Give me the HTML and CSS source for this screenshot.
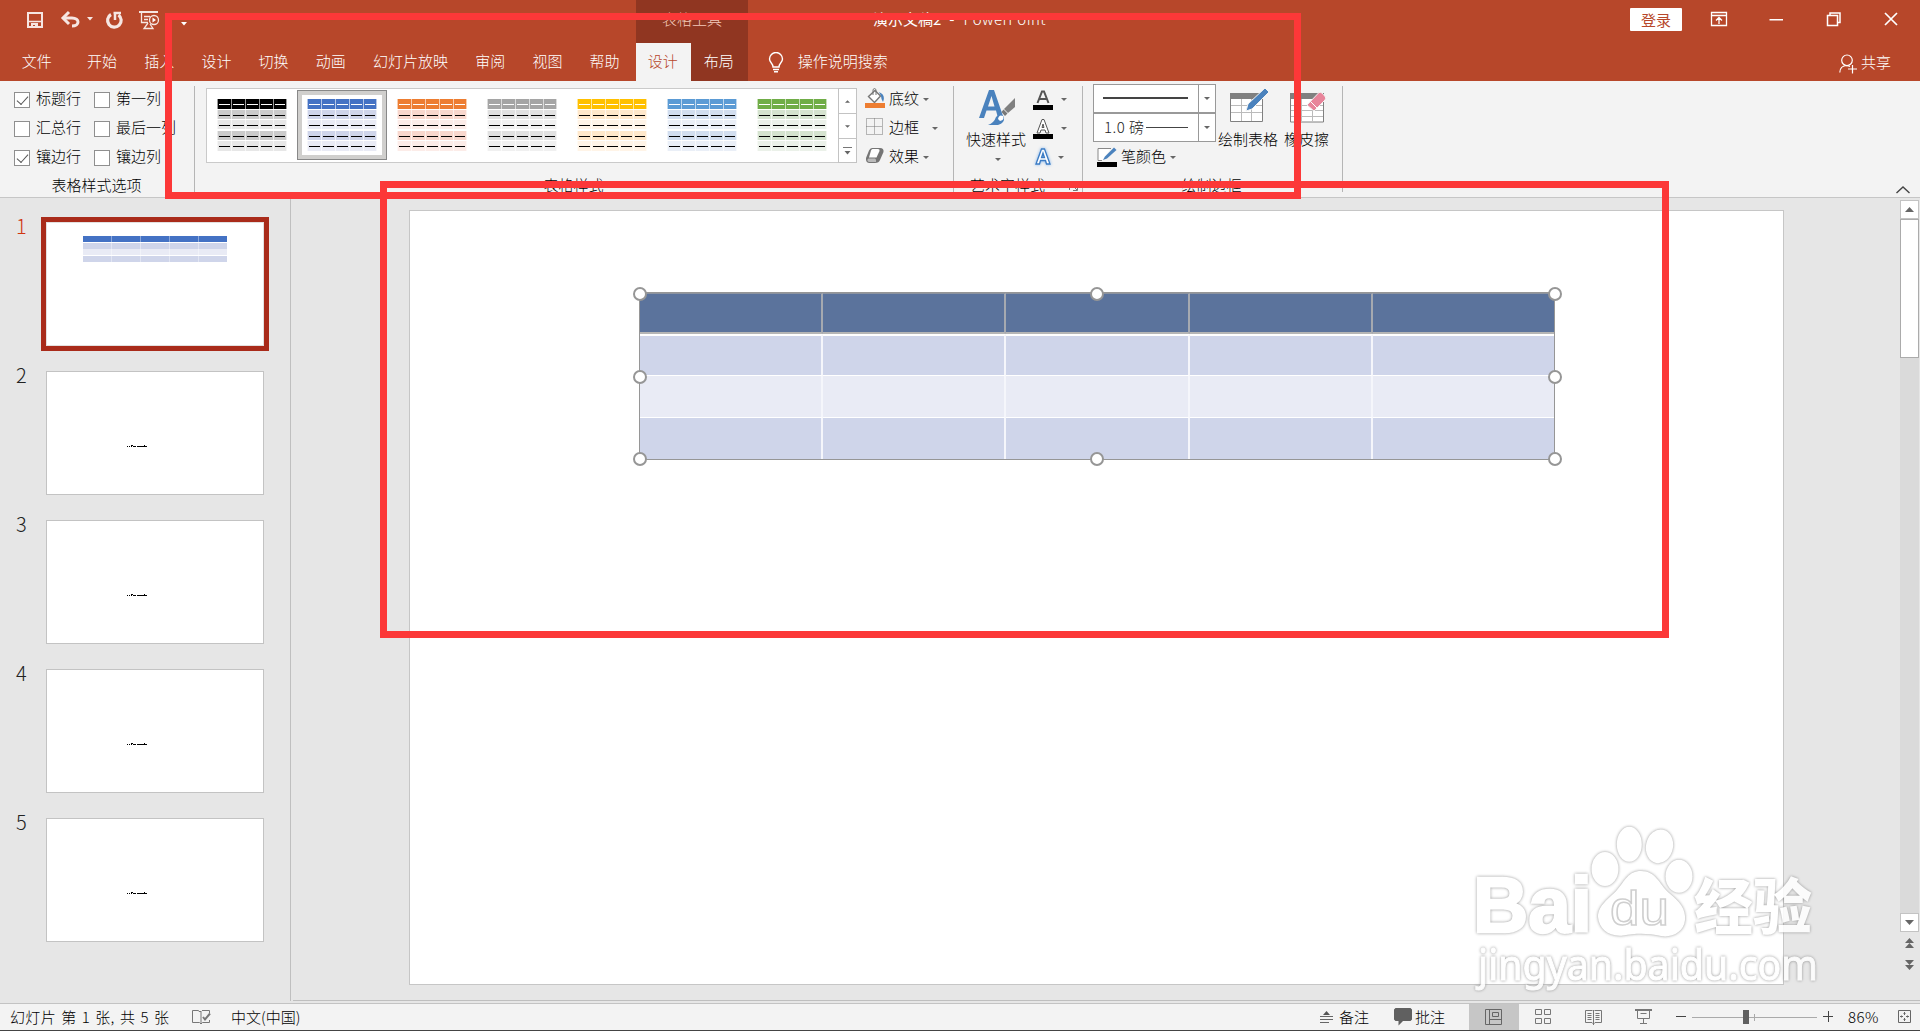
FILE: index.html
```html
<!DOCTYPE html>
<html lang="zh-CN">
<head>
<meta charset="utf-8">
<title>演示文稿2 - PowerPoint</title>
<link rel="stylesheet" href="styles.css">
</head>
<body>
<svg class="defs" width="0" height="0">
  <symbol id="swatch" viewBox="0 0 70 52">
    <rect width="70" height="10" fill="var(--h)"/>
    <rect y="11" width="70" height="9" fill="var(--a)"/>
    <rect y="21" width="70" height="9" fill="var(--b)"/>
    <rect y="32" width="70" height="9" fill="var(--a)"/>
    <rect y="42" width="70" height="10" fill="var(--b)"/>
    <path d="M.5 0V52M14.5 0V52M28.5 0V52M42.5 0V52M56.5 0V52M69.5 0V52" stroke="#fff" stroke-opacity=".6"/>
    <path d="M2 5.5H68" stroke="#fff" stroke-dasharray="11 3"/>
    <path d="M2 16.5H68M2 26.5H68M2 37.5H68M2 47.5H68" stroke="#000" stroke-dasharray="11 3"/>
  </symbol>
  <symbol id="caret" viewBox="0 0 6 3"><path d="M0 0H6L3 3Z" fill="#666"/></symbol>
  <symbol id="scribble" viewBox="0 0 20 3"><path d="M0 1h1v1H0zM2 1h1v1H2zM4 0h2v1H5v1H4zM6 1h3v1H6zM10 1h7V0h1v1h2v1H10z" fill="#000"/></symbol>
</svg>

<header class="titlebar">
  <div class="quick">
    <svg width="170" height="43" viewBox="0 0 170 43" fill="none" stroke="#f6e6e2">
      <path d="M28 13H42V27H28Z" stroke-width="2"/><path d="M28 21.500H42" stroke-width="1.500"/><path d="M31 28V23H38V28H35V25H33V28Z" fill="#f6e6e2" stroke="none"/>
      <path d="M63 18H72C80 18 80 26 72 26" stroke-width="3"/><path d="M69 12L63 18L69 24" stroke-width="3"/>
      <path d="M87 17H93L90 20.500Z" fill="#f6e6e2" stroke="none"/>
      <path d="M111 14.500A6.800 6.800 0 1 0 118.500 15" stroke-width="3.200"/><path d="M113.500 13H121M115 12V20" stroke-width="2.500"/>
      <path d="M139 12H158" stroke-width="2"/><path d="M141.500 13V22.500H148M144 16.500H150M144 19.500H148" stroke-width="1.300"/><circle cx="154" cy="20" r="4.500" stroke-width="1.300"/><path d="M152.500 17.500V22.500L156 20Z" fill="#fff" stroke="none"/><path d="M148 23L144 28.500H153L150 24" stroke-width="1.300"/>
    </svg>
    <svg class="more" width="6" height="4" viewBox="0 0 6 4"><path d="M0 0H6L3 3.500Z" fill="#fff"/></svg>
  </div>
  <div class="tool-title">表格工具</div>
  <div class="doc-title"><span>演示文稿2</span><span>-</span><span class="app-name">PowerPoint</span></div>
  <div class="login">登录</div>
  <svg class="winbtns" width="200" height="38" viewBox="0 0 200 38" fill="none" stroke="#fff" stroke-width="1.300">
    <path d="M5.500 12.500H20.500V25.500H5.500ZM5.500 15.500H20.500M13 24V18M10 20.500L13 17.500L16 20.500"/>
    <path d="M63.500 19.800H77M121.500 15.500H131.500V25.500H121.500ZM124 15V13H134V22.500H132" stroke-width="1.500"/>
    <path d="M179 13L191 25M191 13L179 25" stroke-width="1.700"/>
  </svg>
</header>

<nav class="tabs">
  <span class="tab file">文件</span><span class="tab">开始</span><span class="tab">插入</span><span class="tab">设计</span><span class="tab">切换</span><span class="tab">动画</span><span class="tab">幻灯片放映</span><span class="tab">审阅</span><span class="tab">视图</span><span class="tab">帮助</span>
  <span class="tab active">设计</span><span class="tab layout">布局</span>
  <svg class="bulb" width="16" height="21" viewBox="0 0 16 21" fill="none" stroke="#fff" stroke-width="1.400"><path d="M5 15C5 11 1.500 10.500 1.500 7A6.300 6.300 0 0 1 14.500 7C14.500 10.500 11 11 11 15ZM5 17.500H11M6 19.800H10"/></svg>
  <span class="tell">操作说明搜索</span>
  <svg class="person" width="18" height="20" viewBox="0 0 18 20" fill="none" stroke="#fff" stroke-width="1.200"><circle cx="8" cy="6.300" r="5.300"/><path d="M.8 18.500C1 14 4 11.500 8 11.500L11 12.500M9 15H18M13.500 11V19.500"/></svg>
  <span class="share">共享</span>
</nav>

<section class="ribbon">
  <div class="group options">
    <div class="checks">
      <label><i class="on"></i><span>标题行</span></label><label><i></i><span>第一列</span></label>
      <label><i></i><span>汇总行</span></label><label><i></i><span>最后一列</span></label>
      <label><i class="on"></i><span>镶边行</span></label><label><i></i><span>镶边列</span></label>
    </div>
    <div class="caption">表格样式选项</div>
  </div>
  <div class="group styles">
    <div class="row">
      <div class="gallery">
        <div class="item black"><svg><use href="#swatch"/></svg></div>
        <div class="item blue selected"><svg><use href="#swatch"/></svg></div>
        <div class="item orange"><svg><use href="#swatch"/></svg></div>
        <div class="item gray"><svg><use href="#swatch"/></svg></div>
        <div class="item gold"><svg><use href="#swatch"/></svg></div>
        <div class="item sky"><svg><use href="#swatch"/></svg></div>
        <div class="item green"><svg><use href="#swatch"/></svg></div>
        <div class="spin">
          <b><svg width="5" height="3" viewBox="0 0 6 3"><path d="M0 3H6L3 0Z" fill="#666"/></svg></b>
          <b><svg width="5" height="3"><use href="#caret"/></svg></b>
          <b><svg width="9" height="8" viewBox="0 0 9 8"><path d="M0 .5H9" stroke="#777"/><path d="M1.500 4H7.500L4.500 7.500Z" fill="#666"/></svg></b>
        </div>
      </div>
      <div class="effects">
        <div><svg width="20" height="21" viewBox="0 0 20 21"><path d="M3.500 8.500L10 2.500L15.500 8L9.500 14.500Z" fill="#fff" stroke="#777" stroke-width="1.400"/><path d="M8 7V1.500Q9.500-.5 11 1.500V7" fill="none" stroke="#777"/><path d="M14 4Q21 7 18 14Q16 11 16 8Z" fill="#4a82bd"/><path d="M0 15H20V20H0Z" fill="#ed7d31"/></svg><span>底纹</span><svg class="c" width="6" height="3"><use href="#caret"/></svg></div>
        <div><svg width="20" height="21" viewBox="0 0 20 21"><path d="M1.500 1.500H17.500V17.500H1.500ZM1.500 9.500H17.500M9.500 1.500V17.500" fill="none" stroke="#777" stroke-dasharray="1 1"/></svg><span>边框</span><svg class="c far" width="6" height="3"><use href="#caret"/></svg></div>
        <div><svg width="20" height="21" viewBox="0 0 20 21"><path d="M7 2H15Q19 2 18.500 6L15 14Q14 17 10 17H4Q.5 16.500 1 12L4 4.500Q5 2 7 2Z" fill="#757575"/><path d="M7.500 3H13Q15 3.200 14.500 5L11.500 11.500H4L6 4.500Q6.500 3 7.500 3Z" fill="#fff"/><path d="M3.500 12.500H10Q11.500 13 11 16H4.500Q2 15.500 2.500 13.500Z" fill="#bbb"/></svg><span>效果</span><svg class="c" width="6" height="3"><use href="#caret"/></svg></div>
      </div>
    </div>
    <div class="caption">表格样式</div>
  </div>
  <div class="group wordart">
    <div class="row">
      <div class="big quickstyle">
        <svg width="38" height="36" viewBox="0 0 38 36"><path d="M1 28L11 0H16L25 26L20 28L18 20.500H8.500L6 28ZM10 16.500H16.500L13.500 6Z" fill="#4a82bd" fill-rule="evenodd"/><path d="M37 8V17L30 23L26 19Z" fill="#808080"/><path d="M25.500 19.500L29.500 23.500L27 26L23.500 22Z" fill="#777"/><path d="M10 35Q16 33 18 27Q22 22 26 27Q27 33 20 35Z" fill="#4a82bd"/><path d="M20 29Q21 24 25 26Q27 30 22 31Z" fill="#fff"/></svg>
        <span>快速样式</span><svg class="c" width="6" height="3"><use href="#caret"/></svg>
      </div>
      <div class="letters">
        <div><svg width="20" height="22" viewBox="0 0 20 22"><path d="M4.500 14L9 2.500H11L15.500 14M6.300 10H13.700" fill="none" stroke="#555" stroke-width="2"/><path d="M0 16H20V21H0Z"/></svg><svg class="c" width="6" height="3"><use href="#caret"/></svg></div>
        <div><svg width="20" height="22" viewBox="0 0 20 22"><path d="M4 15L9 1.500H11L16 15H13L12 12H8L7 15ZM9 9.500H11L10 6Z" fill="#fff" stroke="#555"/><path d="M0 16H20V21H0Z"/></svg><svg class="c" width="6" height="3"><use href="#caret"/></svg></div>
        <div><svg class="glow" width="20" height="22" viewBox="0 0 20 22"><path d="M3 17L8.500 2H11.500L17 17H13.500L12.500 13.500H7.500L6.500 17ZM8.500 10.500H11.500L10 6Z" fill="#fff" stroke="#3c7cc4" stroke-width="1.300"/></svg><svg class="c near" width="6" height="3"><use href="#caret"/></svg></div>
      </div>
    </div>
    <div class="caption">艺术字样式<svg class="launcher" width="9" height="9" viewBox="0 0 9 9" fill="none" stroke="#777"><path d="M.5 8V.5H8M3 3L8 8M8.500 4V8.500H4"/></svg></div>
  </div>
  <div class="group borders">
    <div class="row">
      <div class="pens">
        <div class="combo"><hr class="thick"><b><svg width="6" height="3"><use href="#caret"/></svg></b></div>
        <div class="combo"><span>1.0 磅</span><hr><b><svg width="6" height="3"><use href="#caret"/></svg></b></div>
        <div class="pencolor"><svg width="20" height="20" viewBox="0 0 20 20"><path d="M14 1.500H1V13.500H5" fill="#fff" stroke="#888"/><path d="M6 13L8 9.500L17 .5L19.500 3L10 11.500Z" fill="#4a82bd"/><path d="M0 15H20V20H0Z"/></svg><span>笔颜色</span><svg class="c" width="6" height="3"><use href="#caret"/></svg></div>
      </div>
      <div class="big draw"><svg width="40" height="35" viewBox="0 0 40 35"><path d="M1.500 7.500H33.500V33.500H1.500Z" fill="#fff" stroke="#808080"/><path d="M1 5H34V11H1Z" fill="#808080"/><path d="M2 17.500H33M2 24.500H33M12.500 11V33M22.500 11V33" stroke="#bbb"/><path d="M17 23L19 16L36 0L40 4L23 21Z" fill="#4a82bd" stroke="#f3f3f3"/></svg><span>绘制表格</span></div>
      <div class="big erase"><svg width="38" height="35" viewBox="0 0 38 35"><path d="M1.500 7.500H34.500V34H1.500Z" fill="#fff" stroke="#808080"/><path d="M1 5H35V11H1Z" fill="#808080"/><path d="M2 17.500H34M2 22.500H34M2 28.500H34M12.500 11V33M23.500 11V33" stroke="#bbb"/><path d="M18 17L30 4.500Q31.500 4 33 5L36.500 9Q37 10.500 36 12L25 23Z" fill="#e8849a" stroke="#f3f3f3"/><path d="M21.500 13.500L28 20" stroke="#fff"/></svg><span>橡皮擦</span></div>
    </div>
    <div class="caption">绘制边框</div>
  </div>
  <svg class="collapse" width="14" height="8" viewBox="0 0 14 8"><path d="M.5 7L7 1L13.500 7" fill="none" stroke="#444" stroke-width="1.400"/></svg>
</section>

<main class="work">
  <aside class="thumbs">
    <div class="thumb current"><span>1</span><div class="page"><div class="mini"><i></i><i></i><i></i><i></i></div></div></div>
    <div class="thumb"><span>2</span><div class="page"><svg width="20" height="3"><use href="#scribble"/></svg></div></div>
    <div class="thumb"><span>3</span><div class="page"><svg width="20" height="3"><use href="#scribble"/></svg></div></div>
    <div class="thumb"><span>4</span><div class="page"><svg width="20" height="3"><use href="#scribble"/></svg></div></div>
    <div class="thumb"><span>5</span><div class="page"><svg width="20" height="3"><use href="#scribble"/></svg></div></div>
  </aside>
  <div class="canvas">
    <div class="slide">
      <div class="table-frame">
        <table>
          <colgroup><col class="w1"><col class="w1"><col class="w2"><col class="w1"><col></colgroup>
          <tr class="head"><td></td><td></td><td></td><td></td><td></td></tr>
          <tr class="odd first"><td></td><td></td><td></td><td></td><td></td></tr>
          <tr class="even"><td></td><td></td><td></td><td></td><td></td></tr>
          <tr class="odd last"><td></td><td></td><td></td><td></td><td></td></tr>
        </table>
        <i class="handle l t"></i><i class="handle m t"></i><i class="handle r t"></i>
        <i class="handle l c"></i><i class="handle r c"></i>
        <i class="handle l b"></i><i class="handle m b"></i><i class="handle r b"></i>
      </div>
    </div>
    <div class="scroll">
      <b><svg width="9" height="5" viewBox="0 0 9 5"><path d="M0 5H9L4.500 0Z" fill="#666"/></svg></b>
      <div class="track"><div class="knob"></div></div>
      <b><svg width="9" height="5" viewBox="0 0 9 5"><path d="M0 0H9L4.500 5Z" fill="#666"/></svg></b>
      <svg class="pager" width="9" height="34" viewBox="0 0 9 34"><path d="M0 5H9L4.500 0ZM0 10H9L4.500 5ZM0 22H9L4.500 27ZM0 27H9L4.500 32Z" fill="#666"/></svg>
    </div>
  </div>
</main>

<footer class="status">
  <span class="count">幻灯片 第 1 张, 共 5 张</span>
  <svg class="book" width="19" height="16" viewBox="0 0 19 16" fill="none" stroke="#777"><path d="M9 2.500H7L6.500 1.500H.5V13.500H7.500L9 15L10.500 13.500H17.500V11M9 2V15M10 1.500H17.500V4"/><path d="M11 8L13 10.500L18 4.500" stroke-width="2"/></svg>
  <span class="lang">中文(中国)</span>
  <svg class="notes-icon" width="13" height="14" viewBox="0 0 13 14"><path d="M3 5H10L6.500 1Z" fill="#555"/><path d="M0 6.500H13M0 9.500H13M0 12.500H9" stroke="#666"/></svg>
  <span class="notes">备注</span>
  <svg class="comment-icon" width="18" height="18" viewBox="0 0 18 18"><path d="M1.500 0H16.500L18 1.500V11.500L16.500 13H9L4.500 17.500V13H1.500L0 11.500V1.500Z" fill="#606060"/></svg>
  <span class="comments">批注</span>
  <div class="view on"><svg width="18" height="17" viewBox="0 0 18 17" fill="none" stroke="#666"><path d="M.5 .5H16.500V15.500H.5ZM4.500 .5V15.500M4.500 10.500H16.500M7.500 3.500H13.500V7.500H7.500Z"/></svg></div>
  <div class="view"><svg width="18" height="17" viewBox="0 0 18 17" fill="none" stroke="#777"><path d="M.5 .5H6.500V5.500H.5ZM9.500 .5H15.500V5.500H9.500ZM.5 9.500H6.500V14.500H.5ZM9.500 9.500H15.500V14.500H9.500Z"/></svg></div>
  <div class="view"><svg width="18" height="17" viewBox="0 0 18 17" fill="none" stroke="#777"><path d="M7.500 1.500H.5V13.500H7L8.500 15L10 13.500H16.500V1.500H9.500M8.500 1V16M2.500 4.500H6.500M2.500 6.500H6.500M2.500 8.500H6.500M2.500 10.500H6.500M10.500 4.500H14.500M10.500 6.500H14.500M10.500 8.500H14.500M10.500 10.500H14.500"/></svg></div>
  <div class="view"><svg width="18" height="17" viewBox="0 0 18 17" fill="none" stroke="#777"><path d="M0 1H17" stroke-width="2"/><path d="M2.500 2V9.500H14.500V2M5.500 4.500H11.500M8.500 10V14.500M5 14.500H12"/></svg></div>
  <svg class="zoom" width="160" height="17" viewBox="0 0 160 17"><path d="M0 7.500H10M147 7.500H157M152.500 2V13" stroke="#444"/><path d="M16 8.500H141M78.500 5V12" stroke="#aaa"/><path d="M67 1H73V15H67Z" fill="#606060"/></svg>
  <span class="percent">86%</span>
  <svg class="fit" width="14" height="14" viewBox="0 0 14 14" fill="none" stroke="#666"><path d="M.5 .5H12.500V12.500H.5Z"/><path d="M6.500 2V5M6.500 8V11M2 6.500H5M8 6.500H11M5.500 3.500H7.500M5.500 9.500H7.500M3.500 5.500V7.500M9.500 5.500V7.500"/></svg>
</footer>

<svg class="watermark" width="380" height="180" viewBox="1460 820 380 180">
  <g fill="#fff">
    <text class="wm-bai" x="1473" y="932" textLength="119" lengthAdjust="spacingAndGlyphs">Bai</text>
    <ellipse cx="1605" cy="869" rx="13.500" ry="17"/>
    <ellipse cx="1629.300" cy="844.300" rx="12.500" ry="17.500"/>
    <ellipse cx="1659.500" cy="846.300" rx="13.500" ry="17" transform="rotate(12 1659.500 846.300)"/>
    <ellipse cx="1679" cy="876.300" rx="13.500" ry="16.500"/>
    <path d="M1641 871C1656 871 1659 884 1669 893C1680 902 1686 909 1685 920C1684 932 1672 938 1661 936C1648 933 1636 933 1623 935.500C1609 937 1599 929 1598 917C1598 905 1609 899 1617 890C1625 881 1628 871 1641 871Z"/>
    <text class="wm-cn" x="1694" y="929" textLength="118" lengthAdjust="spacingAndGlyphs">经验</text>
    <text class="wm-url" x="1478" y="980" textLength="340" lengthAdjust="spacingAndGlyphs">jingyan.baidu.com</text>
  </g>
  <text class="wm-du" x="1610" y="925" textLength="59" lengthAdjust="spacingAndGlyphs">du</text>
</svg>
<div class="mark mark-ribbon"></div>
<div class="mark mark-table"></div>
</body>
</html>
```
FILE: styles.css
```css
* { box-sizing: border-box; }
body {
  margin: 0; width: 1920px; height: 1031px; overflow: hidden; position: relative;
  display: flex; flex-direction: column;
  font: 300 15px/20px "Noto Sans CJK SC", sans-serif; color: #000; background: #e6e6e6;
  white-space: nowrap;
}
svg { display: block; flex: none; }
.defs { position: absolute; }
i { font-style: normal; display: block; }

.titlebar { height: 43px; background: #b7472a; display: flex; color: #fff; flex: none; }
.quick { width: 636px; display: flex; }
.more { margin: 22px 0 0 11px; }
.tool-title { width: 112px; background: #903621; color: #f4c9ba; text-align: center; padding-top: 9px; }
.doc-title { display: flex; padding: 9px 0 0 125px; width: 882px; font-weight: 400; }
.doc-title span:nth-child(2) { margin: 0 9px 0 8px; }
.app-name { font-weight: 300; letter-spacing: .4px; }
.login { width: 52px; height: 23px; margin-top: 8px; background: #fff; color: #b7472a; text-align: center; line-height: 23px; border-radius: 1px; font-weight: 400; }
.winbtns { margin-left: 24px; }

.tabs { height: 38px; background: #b7472a; color: #fff; display: flex; flex: none; line-height: 35px; }
.tab { padding: 0 13.600px; }
.tab.file { padding: 0 21.700px; }
.tab.active { background: #f3f3f3; color: #b7472a; width: 55px; padding: 0 12px; }
.tab.layout { background: #903621; width: 57px; padding: 0 13px; }
.tab:nth-child(10) { width: 59.800px; }
.bulb { margin: 9px 0 0 20px; }
.tell { margin-left: 14px; width: 1042px; }
.person { margin-top: 11px; }
.share { margin: 1px 29px 0 4px; }

.ribbon { height: 117px; background: #f3f3f3; border-bottom: 1px solid #c6c6c6; display: flex; flex: none; }
.group { position: relative; height: 116px; display: flex; flex-direction: column; justify-content: space-between; }
.group::after { content: ""; position: absolute; right: 0; top: 5px; width: 1px; height: 106px; background: #b5b5b5; }
.row { display: flex; }
.caption { text-align: center; height: 21px; margin-bottom: 1px; }
.options { width: 195px; }
.options .caption { padding-right: 2px; }
.checks { display: grid; grid-template-columns: 80px auto; grid-auto-rows: 29px; padding: 4px 0 0 14px; }
.checks label { display: flex; align-items: center; gap: 6px; }
.checks span { margin-top: -3px; }
.checks i { width: 16px; height: 16px; background: #fff; border: 1px solid #8f8f8f; }
.checks i.on::after { content: ""; display: block; width: 10px; height: 5px; border: solid #555; border-width: 0 0 1.500px 1.500px; transform: translate(2px, 3px) rotate(-48deg); }
.styles { width: 759px; }
.styles .caption { padding-right: 2px; }
.gallery { margin: 7px 0 0 11px; width: 651px; height: 75px; border: 1px solid #cacaca; background: #fff; display: flex; flex: none; }
.item { width: 90px; height: 70px; margin-top: 1px; padding: 8px 0 0 9px; border: 1px solid transparent; }
.item svg { width: 70px; height: 52px; }
.item.selected { border-color: #888; box-shadow: inset 0 0 0 4px #d0cfcd; }
.black { --h: #000; --a: #cbcbcb; --b: #e7e7e7; }
.blue { --h: #4472c4; --a: #cfd5ea; --b: #e9ebf5; }
.orange { --h: #ed7d31; --a: #f8d7cd; --b: #fcece8; }
.gray { --h: #a5a5a5; --a: #e1e1e1; --b: #f0f0f0; }
.gold { --h: #ffc000; --a: #ffe8cb; --b: #fff4e7; }
.sky { --h: #5b9bd5; --a: #d2deef; --b: #eaeff7; }
.green { --h: #70ad47; --a: #d5e3cf; --b: #ebf1e9; }
.spin { margin: -1px -1px -1px auto; width: 19px; display: grid; grid-template-rows: 26px 25px 24px; }
.spin b { border: 1px solid #c3c3c3; margin-top: -1px; display: flex; align-items: center; justify-content: center; }
.spin b:first-child { margin-top: 0; }
.effects { padding: 3px 0 0 8px; }
.effects div { height: 29px; display: flex; align-items: center; }
.effects span { margin: -2px 0 0 4px; }
.c { margin-left: 4px; margin-top: 1px; }
.c.far { margin-left: 13px; }
.wordart { width: 129px; }
.big { display: flex; flex-direction: column; align-items: center; }
.quickstyle { margin-left: 12px; width: 60px; padding-top: 9px; }
.quickstyle svg:first-child { margin-left: 2px; }
.quickstyle span { margin-top: 3px; }
.quickstyle .c { margin: 9px 0 0 4px; }
.letters { padding: 4px 0 0 7px; }
.letters div { height: 29px; display: flex; align-items: center; }
.letters .c { margin: -1px 0 0 8px; }
.letters .c.near { margin-left: 5px; }
.glow { filter: drop-shadow(0 0 1.500px #7fb2ea); }
.wordart .caption { display: flex; justify-content: flex-end; padding-right: 5px; }
.launcher { margin: 7px 0 0 24px; }
.borders { width: 260px; }
.borders .caption { padding-right: 3px; }
.pens { margin: 3px 0 0 10px; width: 123px; }
.combo { height: 29px; border: 1px solid #999; background: #fff; display: flex; align-items: center; }
.combo b { width: 17px; align-self: stretch; border-left: 1px solid #999; display: flex; align-items: center; justify-content: center; }
.combo hr { width: 42px; margin: 0 10px 0 auto; border: 0; border-top: 1px solid #444; }
.combo hr.thick { width: 85px; border-top-width: 2px; margin-top: -1px; }
.combo span { margin: -2px -4px 0 10px; color: #222; letter-spacing: .5px; }
.pencolor { display: flex; margin: 5px 0 0 4px; }
.pencolor span { margin: -1px 0 0 4px; }
.pencolor .c { margin-top: 9px; }
.draw { width: 60px; margin-left: 2px; padding-top: 7px; }
.draw svg { margin-left: 2px; }
.draw span { margin-top: 6px; }
.erase { width: 45px; margin-left: 6px; padding-top: 7px; }
.erase svg { margin-left: 2px; }
.erase span { margin-top: 6px; }
.collapse { margin: 105px 0 0 553px; }

.work { height: 805px; display: flex; flex: none; }
.thumbs { width: 291px; height: 803px; border-right: 1px solid #bfbfbf; padding-top: 24px; }
.thumb { display: flex; height: 149px; padding-left: 16px; }
.thumb span { font: 300 20px/24px "Noto Sans CJK SC", sans-serif; color: #222; width: 30px; margin-top: -8px; }
.page { width: 218px; height: 124px; background: #fff; border: 1px solid #c3c3c3; flex: none; }
.page svg { margin: 73px 0 0 80px; }
.current .page { border-color: #e3e0df; box-shadow: 0 0 0 5px #a92b1a; }
.current span { color: #d0350f; }
.mini { width: 144px; margin: 13px 0 0 36px; display: grid; gap: .6px; background: #fff; }
.mini i { height: 6px; background: linear-gradient(90deg, transparent 28px, #ffffff60 28px) 0 0 / 29px 6px, #cfd5ea; }
.mini i:first-child { background-color: #4472c4; }
.mini i:nth-child(3) { background-color: #e9ebf5; }
.canvas { flex: 1; margin: 0 0 2px 2px; height: 803px; border-bottom: 1px solid #bfbfbf; display: flex; }
.slide { width: 1375px; height: 775px; margin: 12px 0 0 116px; border: 1px solid #c6c6c6; background: #fff; flex: none; }
.table-frame { position: relative; width: 916px; height: 168px; margin: 81px 0 0 229px; border: 1px solid #969696; }
table { border-collapse: separate; border-spacing: 0; table-layout: fixed; width: 914px; height: 166px; }
.w1 { width: 183px; }
.w2 { width: 184px; }
td { padding: 0; border-right: 2px solid #f5f6fb; }
td:last-child { border-right: 0; }
.head td { background: #5b739c; border-color: #a5a9b0; height: 41px; border-bottom: 2px solid #b5b5b5; border-top: 1px solid #8c939f; }
.odd td { background: #cfd5ea; height: 41px; }
.first td { border-top: 2px solid #fff; }
.even td { background: #e9ebf5; height: 43px; border-top: 1px solid #fff; border-bottom: 1px solid #fff; }
.last td { height: 41px; }
.handle { position: absolute; width: 14px; height: 14px; border: 2.500px solid #969696; border-radius: 50%; background: #fff; }
.l { left: -7px; } .handle.m { left: 450px; } .r { right: -8px; }
.t { top: -6px; } .handle.c { top: 77px; margin: 0; } .handle.b { bottom: -7px; }
.scroll { margin: 2px 1px 0 auto; width: 19px; height: 800px; }
.scroll b { width: 19px; height: 19px; background: #fff; border: 1px solid #c3c3c3; display: flex; align-items: center; justify-content: center; }
.track { height: 694px; background: #dadada; }
.knob { height: 139px; background: #fff; border: 1px solid #ababab; }
.pager { margin: 6px 0 0 5px; }

.status { height: 28px; background: #f3f3f3; border-top: 1px solid #c3c3c3; border-bottom: 1px solid #444; display: flex; align-items: center; flex: none; }
.status span { margin-top: -1px; }
.count { margin-left: 10px; width: 182px; word-spacing: 1.500px; letter-spacing: .35px; }
.lang { margin-left: 20px; width: 1089px; }
.notes { margin-left: 6px; width: 55px; }
.comments { margin-left: 3px; width: 54px; }
.view { width: 50px; height: 26px; display: flex; align-items: center; justify-content: center; }
.view.on { background: #c6c6c6; }
.zoom { margin-left: 7px; }
.percent { margin-left: 12px; width: 50px; letter-spacing: .5px; }

.watermark { position: absolute; left: 1460px; top: 820px; opacity: .88; filter: drop-shadow(0 0 1.500px #888); }
.wm-bai { font: 700 78px "Liberation Sans", sans-serif; stroke: #fff; stroke-width: 2.500px; }
.wm-cn { font: 900 60px "Noto Sans CJK SC", sans-serif; }
.wm-url { font: 400 41px "Noto Sans", sans-serif; stroke: #fff; stroke-width: 1px; }
.wm-du { font: 400 49px "Liberation Sans", sans-serif; fill: #fff; stroke: #c9c9c9; stroke-width: 1.500px; }
.mark { position: absolute; border: 7px solid #fc3838; pointer-events: none; }
.mark-ribbon { left: 165px; top: 13px; width: 1136px; height: 186px; }
.mark-table { left: 380px; top: 181px; width: 1289px; height: 457px; }
```
